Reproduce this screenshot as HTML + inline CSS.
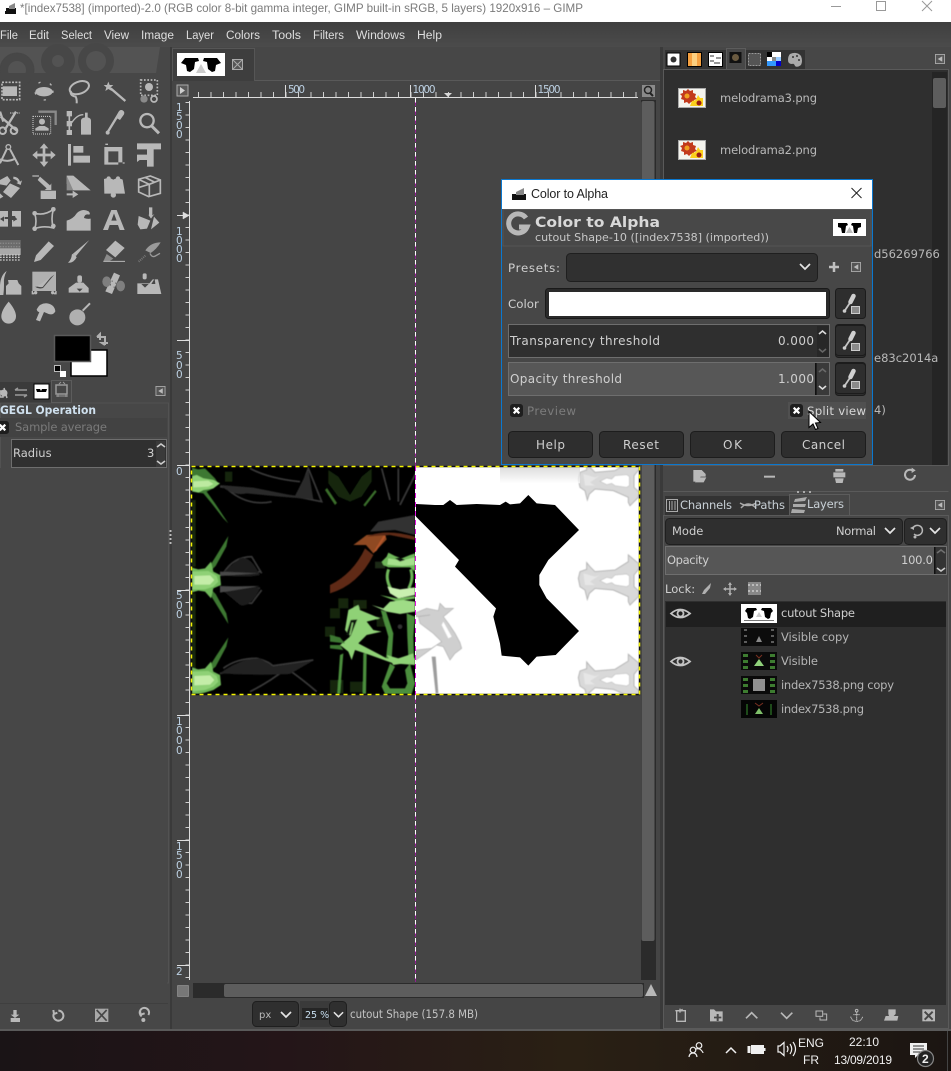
<!DOCTYPE html>
<html><head><meta charset="utf-8"><title>GIMP</title>
<style>
html,body{margin:0;padding:0;background:#474747;width:951px;height:1071px;overflow:hidden}
svg{display:block;position:absolute;left:0;top:0}
text{font-family:"DejaVu Sans",sans-serif;font-size:12px;fill:#d6d6d6}
.s{font-family:"Liberation Sans",sans-serif}
.m{font-size:11.5px;fill:#dedede}
.dim{fill:#8a8a8a}
.b{font-weight:bold}
.blue{font-size:10.5px;fill:#bcd0e2}
</style></head><body>
<svg width="951" height="1071" viewBox="0 0 951 1071" xmlns="http://www.w3.org/2000/svg">
<defs>
<filter id="sf" x="-5%" y="-5%" width="110%" height="110%"><feGaussianBlur stdDeviation="1.600"/></filter>
<linearGradient id="task" x1="0" x2="1" y1="0" y2="0"><stop offset="0" stop-color="#1a1416"/><stop offset=".3" stop-color="#241518"/><stop offset=".6" stop-color="#2a2014"/><stop offset="1" stop-color="#1b1512"/></linearGradient>
<linearGradient id="top" x1="0" x2="0" y1="0" y2="1"><stop offset="0" stop-color="#3f3f3f"/><stop offset="1" stop-color="#4b4b4b"/></linearGradient>
<symbol id="pick" viewBox="0 0 31 31" overflow="visible" preserveAspectRatio="xMidYMid meet">
<rect x=".5" y=".5" width="30" height="30" rx="3" fill="#2e2e2e" stroke="#1c1c1c"/>
<path d="M9.500 23L15.500 14" stroke="#c4c4c4" stroke-width="1.800"/><path d="M15.500 14L18.500 8" stroke="#d0d0d0" stroke-width="4.500" stroke-linecap="round"/><circle cx="9.500" cy="23" r="1.800" fill="#ccc"/>
<rect x="16.500" y="18.500" width="8" height="7" fill="#8b8b8b" stroke="#ccc"/>
</symbol>
<symbol id="chev" viewBox="0 0 12 8" overflow="visible"><path d="M1 1l5 5 5-5" fill="none" stroke="#e4e4e4" stroke-width="1.700"/></symbol>
<symbol id="menuicon" viewBox="0 0 11 11" overflow="visible"><rect x=".5" y=".5" width="10" height="10" fill="#555" stroke="#a8a8a8"/><path d="M3 5.500L8 2.500V8.500z" fill="#bbb"/></symbol>
<symbol id="chk" viewBox="0 0 14 14" overflow="visible"><rect x="0" y="0" width="14" height="14" rx="3" fill="#1e1e1e"/><path d="M4 4l6 6M10 4l-6 6" stroke="#fff" stroke-width="2.400"/></symbol>
<symbol id="wil" viewBox="0 0 33 17" overflow="visible"><rect width="33" height="17" fill="#fff"/><path d="M5 4h9l1 2-2 1-1 7-3 0-1-5-3-1zM28 4h-9l-1 2 2 1 1 7 3 0 1-5 3-1z" fill="#000"/><path d="M13 14l3.500-6 3.500 6z" fill="#bbb"/></symbol>
<symbol id="fl" viewBox="0 0 28 20" overflow="visible"><rect x=".5" y=".5" width="27" height="19" fill="#f4f4ee" stroke="#aaa"/><path d="M2 6l3-1 0-3 3 1 2-2 2 2 3-1 0 3 3 1-1 3 2 2-3 1 0 3-3-1-2 2-2-2-3 1 0-3-3-1 1-3z" fill="#c23a1c"/><circle cx="9" cy="8" r="2.500" fill="#f0a020"/><path d="M12 18l2-5 4-1 2-5 2 3 3 0 0 8z" fill="#fcd01c"/><circle cx="21" cy="15" r="2.500" fill="#9a1d14"/></symbol>
<symbol id="grn" viewBox="0 0 36 18" overflow="visible"><rect width="36" height="18" fill="#0a0a0a"/><path d="M2 2h5v3H2zM2 8h5v3H2zM2 14h5v3H2zM29 2h5v3h-5zM29 8h5v3h-5zM29 14h5v3h-5z" fill="#3d7c30"/><path d="M13 14l5-7 5 7z" fill="#8fd07a"/><path d="M15 3l3 3 3-3" stroke="#7a3020" fill="none"/></symbol>
<clipPath id="imgL"><rect x="191" y="467" width="224" height="227"/></clipPath>
<clipPath id="imgR"><rect x="416" y="467" width="224" height="227"/></clipPath>
<g id="gf">
<path d="M18 22L40 28 60 25 90 55 100 70 85 85 65 95 90 130 130 190 115 175 80 130 55 100 18 95Z" fill="#3c7830"/>
<path d="M18 50L35 45 55 55 85 60 105 70 85 85 55 90 40 98 18 92Z" fill="#8fd176"/>
<path d="M25 64L70 62 85 72 70 80 25 82Z" fill="#bdeaa0"/>
</g>
<g id="gm">
<path d="M72 322L92 290 130 228 124 260 92 318 80 330Z" fill="#3c7830"/>
<path d="M72 398L92 430 130 492 124 460 92 402 80 390Z" fill="#3c7830"/>
<path d="M18 322L40 328 60 325 78 305 85 335 105 345 108 375 85 385 78 415 60 395 40 392 18 398Z" fill="#6fb85a"/>
<path d="M18 335L70 333 95 348 100 365 85 380 60 388 18 388Z" fill="#8fd176"/>
<path d="M28 348L75 346 88 360 75 374 28 374Z" fill="#c4eda8"/>
</g>
<g id="gr">
<path d="M25 115L30 95 50 88 50 68 60 80 75 95 135 90 175 65 175 45 205 70 208 85 192 105 192 140 208 155 205 170 180 195 175 185 175 170 130 150 75 145 58 160 52 178 45 150 30 140Z" fill="#d9d9d9" stroke="#b6b6b6" stroke-width="3"/>
<path d="M40 100L75 110 90 105 60 125 75 135 45 135Z" fill="#e6e6e6"/>
<path d="M90 122L110 112 125 115 135 105 170 102 178 108 178 135 170 140 135 135 125 128 110 132Z" fill="#fff" stroke="#c2c2c2" stroke-width="2"/>
</g>
</defs>

<!-- base -->
<rect width="951" height="1071" fill="#474747"/>
<rect y="0" width="951" height="22" fill="#fff"/>
<rect y="22" width="951" height="25" fill="url(#top)"/>
<rect y="47" width="951" height="984" fill="#474747"/>

<!-- titlebar -->
<g transform="translate(3,2)"><rect x="3" y="6" width="10" height="6" fill="#111"/><path d="M6 4l6-3v6H6z" fill="#888"/><rect x="2" y="9" width="3" height="3" fill="#111"/></g>
<text class="s" x="20" y="12" style="font-size:12px;fill:#7b7b7b" textLength="563" lengthAdjust="spacingAndGlyphs">*[index7538] (imported)-2.0 (RGB color 8-bit gamma integer, GIMP built-in sRGB, 5 layers) 1920x916 – GIMP</text>
<path d="M831 6.500h10" stroke="#999" stroke-width="1"/>
<rect x="876.500" y="1.500" width="9" height="9" fill="none" stroke="#999"/>
<path d="M922 1l10 10M932 1l-10 10" stroke="#999"/>

<!-- menu -->
<g class="menu">
<text class="s m" x="0" y="39" textLength="18" lengthAdjust="spacingAndGlyphs">File</text><text class="s m" x="29" y="39" textLength="20" lengthAdjust="spacingAndGlyphs">Edit</text><text class="s m" x="61" y="39" textLength="31" lengthAdjust="spacingAndGlyphs">Select</text><text class="s m" x="104" y="39" textLength="25" lengthAdjust="spacingAndGlyphs">View</text><text class="s m" x="141" y="39" textLength="33" lengthAdjust="spacingAndGlyphs">Image</text><text class="s m" x="186" y="39" textLength="28" lengthAdjust="spacingAndGlyphs">Layer</text><text class="s m" x="226" y="39" textLength="34" lengthAdjust="spacingAndGlyphs">Colors</text><text class="s m" x="272" y="39" textLength="29" lengthAdjust="spacingAndGlyphs">Tools</text><text class="s m" x="313" y="39" textLength="31" lengthAdjust="spacingAndGlyphs">Filters</text><text class="s m" x="356" y="39" textLength="49" lengthAdjust="spacingAndGlyphs">Windows</text><text class="s m" x="417" y="39" textLength="25" lengthAdjust="spacingAndGlyphs">Help</text>
</g>

<!-- toolbox wilber -->
<path d="M0 47H160L156 73H0Z" fill="#535353"/>
<circle cx="17" cy="70" r="17" fill="#474747" stroke="#474747"/><circle cx="17" cy="70" r="9" fill="#535353"/>
<circle cx="58" cy="61" r="17" fill="#474747"/><circle cx="58" cy="61" r="6" fill="#535353"/>
<circle cx="96" cy="61" r="18" fill="#474747"/><circle cx="96" cy="61" r="10" fill="#535353"/>
<rect y="73" width="170" height="6" fill="#474747"/>

<!-- tools: zoom coords -->
<g transform="scale(.33333)" fill="#b8b8b8" stroke="none">
<!-- r1 -->
<rect x="6" y="247" width="53" height="52" fill="none" stroke="#b8b8b8" stroke-width="5" stroke-dasharray="6 4"/><rect x="8" y="259" width="43" height="29"/>
<ellipse cx="132" cy="275" rx="26" ry="14"/><ellipse cx="132" cy="272" rx="27" ry="28" fill="none" stroke="#b8b8b8" stroke-width="4" stroke-dasharray="7 30"/>
<ellipse cx="238" cy="263" rx="30" ry="18" transform="rotate(-20 238 263)" fill="none" stroke="#b8b8b8" stroke-width="6"/><path d="M213 272q-5 14 14 18q4 8 3 20" fill="none" stroke="#b8b8b8" stroke-width="6"/>
<path d="M332 265L376 303" stroke="#b8b8b8" stroke-width="7"/><path d="M325 245l4 10 11 0-8 7 3 11-10-6-9 6 3-11-8-7 10 0z"/>
<rect x="422" y="240" width="50" height="46" fill="none" stroke="#b8b8b8" stroke-width="5" stroke-dasharray="5 5"/><circle cx="447" cy="261" r="12"/><circle cx="432" cy="297" r="11" fill="#8a8a8a"/><circle cx="462" cy="297" r="9" fill="none" stroke="#b8b8b8" stroke-width="5"/>
<!-- r2 -->
<path d="M2 350l48 42M48 335L14 390M0 335l10 30" stroke="#b8b8b8" stroke-width="7" fill="none"/><circle cx="8" cy="392" r="10" fill="none" stroke="#b8b8b8" stroke-width="6"/><circle cx="42" cy="392" r="10" fill="none" stroke="#b8b8b8" stroke-width="6"/><path d="M30 339h30" stroke="#b8b8b8" stroke-width="4" stroke-dasharray="4 3"/>
<path d="M115 335h52v40" fill="none" stroke="#8a8a8a" stroke-width="7"/><rect x="99" y="349" width="53" height="53" fill="none" stroke="#d0d0d0" stroke-width="3" stroke-dasharray="3 3"/><circle cx="126" cy="365" r="9"/><path d="M106 392v-7l12-7h16l12 7v7z"/>
<path d="M208 340v62" stroke="#b8b8b8" stroke-width="5"/><rect x="200" y="333" width="16" height="16"/><rect x="200" y="363" width="16" height="16"/><rect x="200" y="390" width="16" height="15"/><path d="M214 370q16-26 36-26" fill="none" stroke="#b8b8b8" stroke-width="4"/><path d="M243 362q0-8 12-10v-14h8v14q10 2 10 10v42h-30z"/>
<path d="M322 398L350 352" stroke="#b8b8b8" stroke-width="7"/><path d="M346 352l10-17a8 8 0 0 1 16 8l-12 17z"/><circle cx="323" cy="398" r="6"/>
<circle cx="441" cy="362" r="20" fill="none" stroke="#b8b8b8" stroke-width="7"/><path d="M455 378L477 400" stroke="#b8b8b8" stroke-width="9"/>
<!-- r3 -->
<circle cx="25" cy="441" r="7" fill="none" stroke="#b8b8b8" stroke-width="4"/><path d="M20 448L0 490M30 448L55 495M0 478q25 10 45-2" fill="none" stroke="#b8b8b8" stroke-width="6"/>
<path d="M132 430l13 15h-9v16h16v-9l15 13-15 13v-9h-16v16h9l-13 16-13-16h9v-16h-16v9l-15-13 15-13v9h16v-16h-9z"/>
<rect x="204" y="432" width="9" height="65"/><rect x="220" y="438" width="30" height="20"/><rect x="220" y="467" width="50" height="21"/>
<path d="M313 441h54v46h-12v-33h-30v33h30v7h-42z" fill="#b8b8b8"/><path d="M316 433h8M368 489h6" stroke="#b8b8b8" stroke-width="4"/>
<path d="M411 430h72v18h-22v52h-20v-20h-22l-8 6v-22h30v-16h-30z"/>
<!-- r4 -->
<path d="M0 540l22-12 10 14-12 15-20-4zM30 550l30 14-27 30-24-18zM40 530q15 0 20 15l6-4-4 14-13-6 5-2q-4-9-14-10zM0 580l10 10-10 6z"/>
<path d="M97 526l20 0 0 4-20 0zM120 530l30 26 4-6 0 20-20 0 6-5-27-25z"/><rect x="122" y="572" width="46" height="25"/>
<path d="M200 527h20l52 44h-52l-20-20z"/><path d="M200 527v44h20z" fill="#8a8a8a"/><path d="M200 580h18v-8l17 11-17 11v-8h-18z"/>
<path d="M312 537l15-4 13 6 13-6 15 6 7 42h-62z"/><circle cx="326" cy="535" r="6"/><circle cx="354" cy="535" r="6"/><circle cx="340" cy="585" r="8"/>
<g fill="none" stroke="#b8b8b8" stroke-width="5"><path d="M416 538l35-10 30 12v40l-35 10-30-14z"/><path d="M416 538l32 15 33-13M448 553v38M435 532l30 15M418 562l32-10"/></g>
<!-- r5 -->
<path d="M0 633h24v18l-10 0 0 6 10 0v23H0zM36 633h27v47H36v-20l14 0-5-12-9 0z"/><path d="M0 657l12-8v16zM52 657l-12-8v16z" fill="#474747"/>
<g fill="none" stroke="#b8b8b8" stroke-width="5"><path d="M104 640q30 8 56-12q-8 30 0 56q-30-8-56 2q8-22 0-46z"/></g><circle cx="104" cy="640" r="7"/><circle cx="160" cy="628" r="7"/><circle cx="160" cy="678" r="7"/><circle cx="104" cy="686" r="7"/>
<path d="M200 692v-30q20-6 30-22q16-16 36-6q6 6 2 10q-14-4-16 10q10 4 20 2v36z"/>
<path d="M309 690l25-60h16l24 60h-15l-5-15h-25l-5 15zM334 662h16l-8-22z"/>
<path d="M416 648l35 14-10 24-20 2-8-14zM447 622h10v24l6-4-10 14-10-14 4 4zM462 650l16 18-25 20z"/>
<!-- r6 -->
<rect x="0" y="720" width="62" height="30" fill="#6c6c6c"/><rect x="0" y="745" width="62" height="20" fill="#aaa"/><path d="M0 730h62M0 740h62" stroke="#888" stroke-width="4" stroke-dasharray="4 4"/><path d="M0 765h62M0 772h62M0 780h62" stroke="#ccc" stroke-width="4" stroke-dasharray="5 4"/>
<path d="M102 786l6-20 38-42 16 14-40 42z"/>
<path d="M268 720L228 768l-10-6z"/><path d="M216 762q10 2 14 10q-10 18-26 16q10-8 12-26z"/>
<path d="M318 750l28-28 28 22-28 28z"/><path d="M320 762l20 14-12 8h-18z" fill="#8a8a8a"/><path d="M310 784h65" stroke="#b8b8b8" stroke-width="3"/>
<path d="M482 727q-30 0-46 24l16 8q18-12 30-32zM436 751l-6 12" fill="#9a9a9a"/><path d="M450 760q6 14 16 8l14-8" fill="none" stroke="#9a9a9a" stroke-width="4"/><path d="M416 785l20-18" stroke="#777" stroke-width="6" stroke-dasharray="3 3"/>
<!-- r7 -->
<path d="M0 885v-30q2-30 20-42q-10 20-8 38q0 20-2 34z"/><path d="M24 840h28l4 10 8 8v26H18v-26l8-8z"/>
<rect x="97" y="815" width="71" height="58" fill="#b0b0b0"/><path d="M97 873v8h6M168 873v8h-6" stroke="#b8b8b8" stroke-width="4"/><circle cx="107" cy="878" r="5"/><circle cx="158" cy="878" r="5"/><path d="M105 860q10 2 20-8l38-28-34 40q-14 4-24-4z" fill="#474747"/><path d="M108 857q8 0 16-6l32-24-28 34q-12 2-20-4z"/>
<rect x="232" y="826" width="14" height="22" rx="6"/><path d="M228 848h22l16 16v14h-60v-14z"/><path d="M230 866h18l-9 9z" fill="#474747"/>
<path d="M342 818l18 8-24 56-20-8z"/><ellipse cx="320" cy="845" rx="13" ry="16" fill="#7f7f7f"/><ellipse cx="362" cy="858" rx="13" ry="16" fill="#7f7f7f"/><path d="M335 842h3v3h-3zM346 848h3v3h-3zM330 853h3v3h-3zM341 860h3v3h-3z" fill="#474747"/>
<rect x="428" y="820" width="12" height="18" rx="5"/><path d="M412 850h36l10-12h16l10 44h-72z"/><path d="M424 852h22l-11 11z" fill="#474747"/><path d="M464 836l-10 16h12" fill="#474747"/>
<!-- r8 -->
<path d="M26 905q22 26 22 44a22 22 0 0 1-44 0q0-18 22-44z"/>
<path d="M110 928q10-20 32-18q22 4 24 24q-6 12-20 8l-14-6-12 28-12-4 10-24q-6 0-8-8z"/>
<circle cx="232" cy="952" r="24" fill="#b0b0b0"/><path d="M248 932l22-22" stroke="#b8b8b8" stroke-width="6"/>
</g>

<!-- fg/bg -->
<rect x="71" y="350" width="36" height="26" fill="#fff" stroke="#000" stroke-width="1.500"/>
<rect x="54.500" y="335.500" width="36" height="26" fill="#000" stroke="#5a5a5a" stroke-width="1.500"/>
<path d="M97 337h8v8M97 337l3 -3v6M105 345l-3-2h6" fill="none" stroke="#b0b0b0" stroke-width="2"/>
<rect x="54.500" y="365.500" width="6" height="6" fill="#000" stroke="#bbb"/><rect x="60" y="371" width="6" height="6" fill="#fff"/>

<!-- tool options tabs -->
<rect x="0" y="382" width="51" height="21" fill="#3b3b3b"/>
<rect x="51.500" y="380.500" width="20" height="22" fill="#474747" stroke="#5c5c5c"/>
<path d="M0 391h3v6H0zM4 388l3 10" stroke="#b8b8b8" fill="none" stroke-width="1.500"/><circle cx="4" cy="393" r="3.500" fill="#b8b8b8"/>
<path d="M15 390h12M15 395h12M15 390l3-2M27 395l-3 2" stroke="#9a9a9a" stroke-width="1.500" fill="none"/>
<g transform="translate(34,384)"><rect width="15" height="15" fill="#fff" stroke="#000"/><path d="M2 5h4l1 2 1-2h5l-1 3H3z" fill="#000"/></g>
<rect x="56" y="385" width="11" height="9" fill="none" stroke="#9a9a9a" stroke-width="1.500"/><path d="M56 396h12M58 394v3M66 394v3M59 384l2-2M65 384l-2-2" stroke="#9a9a9a"/>
<use href="#menuicon" x="155.500" y="386" width="10" height="10"/>
<rect x="0.500" y="403" width="168" height="580" fill="none" stroke="#5a5a5a" opacity=".6"/>
<text x="0" y="414" class="b" style="font-size:11.800px;fill:#cfe0ee" textLength="96" lengthAdjust="spacingAndGlyphs">GEGL Operation</text>
<rect x="0" y="418" width="167" height="19" fill="#424242"/>
<use href="#chk" x="-4" y="421" width="13" height="13"/>
<text x="15" y="431" style="font-size:11.500px;fill:#7a7a7a" textLength="92">Sample average</text>
<rect x="11.500" y="439.500" width="155" height="28" fill="#303030" stroke="#6e6e6e"/>
<rect x="156" y="441" width="9" height="26" fill="#3a3a3a"/>
<text x="13" y="457" style="font-size:11.500px;fill:#cfcfcf">Radius</text><text x="147" y="457" style="font-size:11.500px;fill:#cfcfcf">3</text>
<path d="M157 447l4-3 4 3M157 461l4 3 4-3" fill="none" stroke="#ccc" stroke-width="1.600"/>
<rect x="0" y="468" width="167" height="535" fill="#474747"/>
<rect x="0" y="1003" width="168" height="1" fill="#3f3f3f"/>
<g transform="translate(0,980) scale(.33333)" fill="#b8b8b8"><path d="M40 90h10v14h8l-13 10-13-10h8zM32 114h28v12H32z"/><path d="M175 92a15 15 0 1 1-13 8M160 90l2 12 10-4" fill="none" stroke="#b8b8b8" stroke-width="6"/><rect x="285" y="86" width="40" height="40" fill="#a8a8a8"/><path d="M290 90l30 32M320 90l-30 32" stroke="#474747" stroke-width="5"/><path d="M445 105a14 14 0 1 0-20 4M420 92l2 12 12-4" fill="none" stroke="#b8b8b8" stroke-width="6"/><circle cx="430" cy="120" r="6"/></g>

<!-- separators -->
<rect x="170" y="47" width="2" height="984" fill="#3a3a3a"/>
<rect x="660" y="47" width="3" height="984" fill="#3a3a3a"/>
<path d="M170.500 530v14" stroke="#bbb" stroke-width="2" stroke-dasharray="2 2"/>
<rect x="0" y="1029" width="951" height="2" fill="#5a5a5a"/>

<!-- image tabs -->
<rect x="172.500" y="48.500" width="82" height="33" fill="#3e3e3e" stroke="#565656"/>
<path d="M255 80.500H660" stroke="#595959"/>
<g transform="translate(177,53)"><rect width="48" height="23" fill="#fff"/><path d="M8 5h13l1 3-4 1-1 7-4 3-3-1-1-6-5-2zM40 5H27l-1 3 4 1 1 7 4 3 3-1 1-6 5-2z" fill="#000"/><path d="M19 20l5-9 5 9z" fill="#ccc"/></g>
<rect x="232.500" y="59.500" width="10" height="10" fill="#555" stroke="#aaa"/><path d="M233 60l9 9M242 60l-9 9" stroke="#aaa"/>
<!-- rulers -->
<rect x="172" y="81" width="488" height="948" fill="#454545"/>
<rect x="177" y="85" width="11" height="11" fill="#5a5a5a" stroke="#aaa" stroke-width="1"/><path d="M180 87v7l5-3.500z" fill="#cfcfcf"/>
<path d="M193 97.500H638" stroke="#ddd" stroke-width="1"/>
<line x1="198" x2="638" y1="94.500" y2="94.500" stroke="#d0d0d0" stroke-width="5" stroke-dasharray="1 11.500" stroke-dashoffset="0"/>
<path d="M285.500 85V97M410.500 85V97M535.500 85V97" stroke="#ddd"/>
<text class="blue" x="288" y="93" textLength="17">500</text><text class="blue" x="412.500" y="93" textLength="23">1000</text><text class="blue" x="537.500" y="93" textLength="23">1500</text>
<path d="M444 93h8l-4 4z" fill="#d8d8d8"/>
<path d="M189.500 101V980" stroke="#ddd"/>
<line x1="187.500" x2="187.500" y1="102" y2="980" stroke="#d0d0d0" stroke-width="4" stroke-dasharray="1 11.500"/>
<path d="M177 215.500H190M177 340.500H190M177 465.500H190M177 590.500H190M177 715.500H190M177 840.500H190M177 965.500H190" stroke="#ddd"/>
<g>
<text class="blue" x="176" y="111">1</text><text class="blue" x="176" y="120">5</text><text class="blue" x="176" y="129">0</text><text class="blue" x="176" y="138">0</text>
<text class="blue" x="176" y="235">1</text><text class="blue" x="176" y="244">0</text><text class="blue" x="176" y="253">0</text><text class="blue" x="176" y="262">0</text>
<text class="blue" x="176" y="359">5</text><text class="blue" x="176" y="369">0</text><text class="blue" x="176" y="378">0</text>
<text class="blue" x="176" y="475">0</text>
<text class="blue" x="176" y="599">5</text><text class="blue" x="176" y="609">0</text><text class="blue" x="176" y="618">0</text>
<text class="blue" x="176" y="725">1</text><text class="blue" x="176" y="734">0</text><text class="blue" x="176" y="744">0</text><text class="blue" x="176" y="754">0</text>
<text class="blue" x="176" y="850">1</text><text class="blue" x="176" y="859">5</text><text class="blue" x="176" y="869">0</text><text class="blue" x="176" y="878">0</text>
<text class="blue" x="176" y="975">2</text>
</g>
<path d="M177 215.500l12 0M183 212l6 3.500-6 3.500z" fill="#ddd" stroke="#ddd" stroke-width=".5"/>

<!-- right scrollbar -->
<rect x="641" y="100" width="15" height="880" fill="#2b2b2b"/>
<rect x="641.500" y="101" width="13" height="840" rx="2" fill="#5d5d5d"/>
<rect x="642" y="85" width="13" height="12" fill="#8a8a8a"/><circle cx="648" cy="90" r="3.500" fill="none" stroke="#222" stroke-width="1.500"/><path d="M650 93l3 3" stroke="#222" stroke-width="2"/>
<!-- bottom scrollbar -->
<rect x="193" y="983" width="451" height="15" fill="#2b2b2b"/>
<rect x="224" y="984" width="419" height="13" rx="2" fill="#5d5d5d"/>
<rect x="177.500" y="985.500" width="11" height="11" fill="#777" stroke="#a8a8a8" stroke-dasharray="1 1"/>
<path d="M651 984l6 12h-12z" fill="#b8b8b8"/>
<!-- status -->
<rect x="252.500" y="1001.500" width="46" height="25" rx="4" fill="#2f2f2f" stroke="#1f1f1f"/>
<text x="259" y="1018" style="font-size:10px;fill:#b8b8b8">px</text>
<use href="#chev" x="280" y="1011" width="12" height="8"/>
<rect x="300" y="1001" width="30" height="26" fill="#3a3a3a"/>
<rect x="302" y="1008" width="26" height="12" fill="#252525"/>
<text x="305" y="1018" style="font-size:9.500px;fill:#c8dff0">25 %</text>
<rect x="329.500" y="1001.500" width="17" height="25" rx="4" fill="#2f2f2f" stroke="#1f1f1f"/>
<use href="#chev" x="333" y="1011" width="11" height="8"/>
<text x="350" y="1018" style="font-size:11.500px;fill:#c4c4c4" textLength="128" lengthAdjust="spacingAndGlyphs">cutout Shape (157.8 MB)</text>

<!-- image -->
<rect x="191" y="466" width="225" height="229" fill="#000"/>
<rect x="416" y="466" width="224" height="229" fill="#fff"/>
<g clip-path="url(#imgL)">
<g transform="translate(185,460) scale(.33333)" filter="url(#sf)">
<g fill="#12260f"><rect x="120" y="35" width="22" height="30"/><rect x="18" y="120" width="14" height="200"/><rect x="18" y="400" width="14" height="230"/><path d="M430 30l30 20 35 55 35-55 30-25 0 40-30 45-35 15-35-15-30-40z"/></g>
<g fill="#3a6e2c"><path d="M420 90l30 45 6-6-30-45zM570 90l-35 45 5 5 35-45z"/></g>
<g fill="none" stroke="#3b3b3b" stroke-width="5"><path d="M195 25q55 30 150 40M130 90q60 50 130 35M105 80l230 30 75 15-40-100-30 85M590 25l25 95M700 25l-55 110M640 25v100"/><path d="M105 340l120-5M105 380l120 5M115 340q30-50 85-50l30 50M115 380q30 50 85 50l30-40"/><path d="M105 640l280-40M115 625q40-30 100-30q40 10 50 25M195 695q60-30 110-70q50 35 90 70"/></g>
<path d="M105 75l100 8 125 25 40-80 15 90-100-8-100-10q-40 10-80-25z" fill="#2c2c2c"/>
<path d="M105 345l60-50q30-10 60 50-40 10-120 0zM105 385l60 50q30 10 60-50-40-10-120 0z" fill="#1e1e1e"/>
<path d="M105 335l120 5-120 8zM105 380l120-2-120 20z" fill="#484848"/>
<path d="M105 640q60-45 120-45l40 25 120-18-70 40q-100 5-210-2z" fill="#232323"/>
<use href="#gf"/><use href="#gm"/>
<path d="M72 622L92 590 130 532 124 560 92 620 80 630Z" fill="#3c7830"/>
<path d="M18 622L40 628 60 625 78 605 85 635 105 645 108 675 85 690 60 698 40 702 18 702Z" fill="#6fb85a"/>
<path d="M18 635L70 633 95 648 100 665 85 680 60 690 18 695Z" fill="#8fd176"/>
<path d="M28 648L75 646 88 660 75 674 28 676Z" fill="#c4eda8"/>
<path d="M555 215l25-30 110-20v60l-60-15z" fill="#333"/>
</g>
<g transform="translate(330,530) scale(.33333)" filter="url(#sf)">
<g fill="#14280f"><rect x="25" y="205" width="30" height="30"/><rect x="70" y="210" width="40" height="26"/><rect x="0" y="450" width="40" height="40"/><rect x="60" y="455" width="40" height="32"/><rect x="140" y="260" width="30" height="30"/><rect x="0" y="235" width="30" height="30"/><rect x="-15" y="290" width="30" height="30"/></g>
<path d="M0 165Q70 130 105 55L130 75Q85 165 0 190Z" fill="#5e2a14"/>
<path d="M70 45L110 15 165 12 170 28 130 70 108 45Z" fill="#8f4a24"/>
<path d="M128 70L160 18 168 18 140 62Z" fill="#b5572a"/>
<path d="M110 20Q165 -5 255 20V30L180 15Z" fill="#5e2a14"/>
<rect x="135" y="95" width="30" height="20" fill="#1a2a18"/>
<path d="M155 95L170 80 175 68 195 78 215 85 240 75 255 70V125L240 112 175 112 160 105Z" fill="#6fb85a"/>
<path d="M175 85L215 92 255 82V105L215 108 172 104Z" fill="#a6e08c"/>
<path d="M195 85L210 82 225 90 210 95Z" fill="#0a120a"/>
<path d="M176 118Q165 145 182 175M242 118Q252 145 236 175" fill="none" stroke="#6fb85a" stroke-width="9"/>
<path d="M172 170L210 178 255 172V195L205 205 180 190Z" fill="#c9f0b0"/>
<path d="M150 195L200 205 255 198V206L200 214Z" fill="#6fb85a"/>
<path d="M125 225L160 235 180 215 220 210 255 215V245L210 252 170 245Z" fill="#9fdc86"/>
<path d="M168 245L190 310 185 385 168 385 175 320 152 240Z" fill="#4c8e3c"/>
<path d="M230 250L232 320 235 380 252 380 250 320 255 260Z" fill="#4c8e3c"/>
<circle cx="210" cy="290" r="7" fill="#303030"/>
<path d="M55 240L85 225 90 240 150 265 110 275 130 300 155 305 110 315 85 340 170 385 255 385V405L190 400 120 375 75 360 65 390 55 365 30 345 60 320 45 300Z" fill="#8fd176"/>
<path d="M62 270L82 268 62 318 48 315Z" fill="#0b120a"/><path d="M68 278L60 315" stroke="#8fd176" stroke-width="4"/>
<path d="M30 375L40 370 30 492H22ZM100 370L110 370 108 492H98Z" fill="#4c8e3c"/>
<path d="M0 315L30 322 45 340 0 335ZM0 345L30 345 40 360 0 355Z" fill="#3c7830"/>
<path d="M170 375L205 385 250 370 255 395 190 405Z" fill="#8fd176"/>
<path d="M180 400L155 470 165 492H245L255 460 240 400 225 420 232 460 225 475H180L170 460 195 410Z" fill="#4c8e3c"/>
</g>
</g>
<g clip-path="url(#imgR)">
<g transform="translate(570,540) scale(.33333)" filter="url(#sf)"><use href="#gr"/><use href="#gr" y="-298"/><use href="#gr" y="298"/></g>
<g transform="translate(410,460) scale(.33333)">
<linearGradient id="shad" x1="0" x2="0" y1="0" y2="1"><stop offset="0" stop-color="#ccc"/><stop offset="1" stop-color="#fff"/></linearGradient>
<rect x="270" y="20" width="240" height="50" fill="url(#shad)" opacity=".7"/>
<g filter="url(#sf)">
<path d="M18 458L50 445 85 452 90 430 105 445 130 445 110 462 100 470 115 490 135 520 150 548 155 565 135 580 120 600 100 560 80 555 18 600V570L65 565 95 545 70 520 30 490 25 470 60 465 18 470Z" fill="#cfcfcf" stroke="#b0b0b0" stroke-width="2"/>
<path d="M100 485L125 530 115 535 95 495Z" fill="#fff"/>
<path d="M65 590l12 110h8l-8-110z" fill="#9c9c9c"/>
</g>
<path d="M18 132L75 135 100 135 120 120 140 135 200 132 270 135 287 125 300 133 330 130 355 105 380 130 435 135 507 210 415 300 388 345 388 375 410 415 507 513 437 585 380 590 355 617 330 592 275 587 270 550 250 470 258 445 135 320 147 300 18 170Z" fill="#000"/>
</g>
</g>
<!-- marching ants -->
<g fill="none" stroke-width="1.500">
<rect x="191.500" y="466.500" width="448" height="228" stroke="#111"/>
<rect x="191.500" y="466.500" width="448" height="228" stroke="#f4f400" stroke-dasharray="4 4"/>
</g>
<!-- split line -->
<path d="M415.500 98V466M415.500 695V982" stroke="#fff" stroke-dasharray="5 4"/>
<path d="M415.500 98V466M415.500 695V982" stroke="#d0d" stroke-dasharray="4 5" stroke-dashoffset="5" opacity=".5"/>
<path d="M415.500 466V695" stroke="#fff"/><path d="M415.500 466V695" stroke="#e010e0" stroke-dasharray="5 4"/>

<!-- right dock top -->
<rect x="663" y="47" width="288" height="23" fill="#474747"/>
<rect x="665" y="50" width="140" height="20" fill="#333"/>
<rect x="726.500" y="48.500" width="19" height="22" fill="#474747" stroke="#5c5c5c"/>
<g><rect x="667" y="53" width="13" height="13" fill="#fff" stroke="#000"/><circle cx="673.500" cy="59.500" r="3" fill="#333"/></g>
<rect x="687.500" y="52.500" width="14" height="14" fill="#f4a040" stroke="#000"/><rect x="692" y="53" width="5" height="13" fill="#fbcf80"/>
<rect x="708.500" y="52.500" width="14" height="14" fill="#fff" stroke="#000"/><path d="M710 56h4M710 61h4M716 58h5M714 63h6" stroke="#777" stroke-width="1.500"/>
<rect x="729.500" y="52" width="12" height="11" fill="#111"/><circle cx="735.500" cy="57.500" r="3.500" fill="#6a5a40"/>
<rect x="748.500" y="53.500" width="12" height="12" fill="#555" stroke="#9a9a9a" stroke-dasharray="2 1"/>
<g transform="translate(767,52)"><rect width="14" height="14" fill="#fff"/><rect width="5" height="5" fill="#000"/><rect x="5" y="5" width="4" height="4" fill="#888"/><rect x="9" y="5" width="5" height="4" fill="#9cf"/><rect y="9" width="9" height="5" fill="#39f"/><rect x="9" y="9" width="5" height="5" fill="#00c"/></g>
<path d="M790 54q7-3 11 2q2 5 0 9q-4 3-6 1q-1-3-3-2-4 0-4-4 0-4 2-6z" fill="#aaa"/><circle cx="793" cy="57" r="1" fill="#333"/><circle cx="797" cy="56" r="1" fill="#333"/><circle cx="799" cy="60" r="1" fill="#333"/>
<use href="#menuicon" x="935" y="54" width="10" height="10"/>
<rect x="663.500" y="69.500" width="285" height="396" fill="#2f2f2f" stroke="#5a5a5a"/>
<rect x="932" y="72" width="15" height="393" fill="#252525"/>
<rect x="933" y="78" width="13" height="30" rx="2" fill="#5d5d5d"/>
<use href="#fl" x="678" y="88" width="28" height="20"/>
<use href="#fl" x="678" y="140" width="28" height="20"/>
<text x="720" y="102" style="font-size:11.500px;fill:#b9b9b9" textLength="97">melodrama3.png</text>
<text x="720" y="154" style="font-size:11.500px;fill:#b9b9b9" textLength="97">melodrama2.png</text>
<text x="874" y="258" style="font-size:11.500px;fill:#b9b9b9">d56269766</text>
<text x="874" y="362" style="font-size:11.500px;fill:#b9b9b9">e83c2014a</text>
<text x="874" y="414" style="font-size:11.500px;fill:#b9b9b9">4)</text>
<g transform="translate(660,465) scale(.33333)" fill="#b8b8b8"><path d="M100 50V15h25l12 12v8h-15l-10 15zM105 52l10-15h24l-8 15z"/><rect x="312" y="32" width="33" height="6"/><path d="M520 22h36v15h-36zM526 12h24v8h-24zM525 40h26l-3 14h-20z"/><path d="M765 30a15 15 0 1 1-8-14" fill="none" stroke="#b8b8b8" stroke-width="6"/><path d="M755 8l12 8-12 8z"/></g>
<rect x="663.500" y="491" width="285" height="1" fill="#5a5a5a"/>
<path d="M797 492h2M803 492h2M809 492h2" stroke="#aaa" stroke-width="2"/>

<!-- layers tabs -->
<rect x="665" y="496" width="124" height="19" fill="#333"/>
<rect x="789.500" y="494.500" width="60" height="21" fill="#474747" stroke="#5c5c5c"/>
<rect x="666.500" y="499.500" width="11" height="12" fill="none" stroke="#aaa"/><path d="M669.500 501v9M672 501v9M675 501v9" stroke="#aaa"/>
<text x="680" y="509" style="font-size:11.500px;fill:#c8d0d6" textLength="52">Channels</text>
<path d="M740 503q8 5 16 0M741 508q7-8 15 0" fill="none" stroke="#aaa" stroke-width="1.500"/>
<text x="754" y="509" style="font-size:11.500px;fill:#c8d0d6" textLength="31">Paths</text>
<path d="M795 499l12-2-2 4-11 1zM793 504h13l-1 3h-12zM792 509l13 1-1 3h-13z" fill="#aaa"/>
<text x="807" y="508" style="font-size:11.500px;fill:#c8d0d6" textLength="37">Layers</text>
<use href="#menuicon" x="935" y="500" width="10" height="10"/>
<rect x="663.500" y="515.500" width="285" height="513" fill="none" stroke="#5a5a5a"/>
<rect x="665.500" y="518.500" width="237" height="26" rx="4" fill="#2f2f2f" stroke="#1f1f1f"/>
<text x="672" y="535" style="font-size:11.500px;fill:#cfcfcf">Mode</text><text x="836" y="535" style="font-size:11.500px;fill:#cfcfcf" textLength="40">Normal</text>
<use href="#chev" x="884" y="527" width="12" height="8"/>
<rect x="904.500" y="518.500" width="42" height="26" rx="4" fill="#2f2f2f" stroke="#1f1f1f"/>
<path d="M913 528a5 5 0 1 1 1 6" fill="none" stroke="#b8b8b8" stroke-width="1.500"/><path d="M910 528l4 -2v4z" fill="#b8b8b8"/><circle cx="915" cy="537" r="1.500" fill="#b8b8b8"/>
<use href="#chev" x="929" y="527" width="12" height="8"/>
<rect x="665.500" y="546.500" width="281" height="28" fill="#333" stroke="#6e6e6e"/>
<rect x="666" y="547" width="268" height="27" fill="#565656"/>
<rect x="934" y="547" width="1.500" height="27" fill="#111"/>
<text x="667" y="564" style="font-size:11.500px;fill:#cfcfcf" textLength="42">Opacity</text><text x="901" y="564" style="font-size:11.500px;fill:#cfcfcf" textLength="32">100.0</text>
<path d="M937 553l4-3 4 3" fill="none" stroke="#6f6f6f" stroke-width="1.600"/><path d="M937 568l4 3 4-3" fill="none" stroke="#ccc" stroke-width="1.600"/>
<text x="665" y="593" style="font-size:11.500px;fill:#cfcfcf">Lock:</text>
<path d="M702 594l2-4 7-7-1 5-5 6z" fill="#b0b0b0"/>
<path d="M730 583v12M724 589h12" stroke="#b0b0b0" stroke-width="1.500"/><path d="M730 582l-2 3h4zM730 596l-2-3h4zM723 589l3-2v4zM737 589l-3-2v4z" fill="#b0b0b0"/>
<rect x="748" y="582" width="13" height="13" fill="#888"/><path d="M748 585h13M748 591h13" stroke="#bbb" stroke-width="2" stroke-dasharray="2 2"/>
<rect x="665" y="601" width="281" height="404" fill="#2f2f2f"/>
<rect x="666" y="602" width="280" height="25" fill="#1f1f1f"/>
<g fill="none" stroke="#c4c4c4" stroke-width="1.800"><path d="M671 613.500q9-8 19 0q-10 8-19 0zM671 661.500q9-8 19 0q-10 8-19 0z"/><circle cx="680.500" cy="613.500" r="3"/><circle cx="680.500" cy="661.500" r="3"/></g>
<g transform="translate(741,604)"><rect width="36" height="19" fill="#fff"/><path d="M6 4h9l1 2-3 1-1 6-3 2-2-1-1-5-2-2zM30 4h-9l-1 2 3 1 1 6 3 2 2-1 1-5 2-2z" fill="#000"/><path d="M15 13l3-5 3 5z" fill="#ccc"/><path d="M3 16.500h30" stroke="#777"/></g>
<text x="781" y="617" style="font-size:11.500px;fill:#cfcfcf" textLength="74">cutout Shape</text>
<g transform="translate(741,628)"><rect width="36" height="18" fill="#0c0c0c"/><path d="M15 14l3-6 3 6z" fill="#888"/><path d="M3 2h3M3 8h3M30 2h3M30 8h3M3 14h3M30 14h3" stroke="#777" stroke-width="1.500"/></g>
<text x="781" y="641" style="font-size:11.500px;fill:#b5b5b5" textLength="68">Visible copy</text>
<use href="#grn" x="741" y="652" width="36" height="18"/>
<text x="781" y="665" style="font-size:11.500px;fill:#b5b5b5" textLength="37">Visible</text>
<g><use href="#grn" x="741" y="676" width="36" height="18"/><rect x="753" y="679" width="12" height="12" fill="#909090"/></g>
<text x="781" y="689" style="font-size:11.500px;fill:#b5b5b5" textLength="113">index7538.png copy</text>
<g transform="translate(741,700)"><rect width="36" height="18" fill="#050505"/><path d="M14 14l4-6 4 6z" fill="#7fbf6a"/><path d="M6 4v11M30 4v11" stroke="#1e4a1a" stroke-width="2"/><path d="M14 3l4 3 4-3" stroke="#7a3020" fill="none"/></g>
<text x="781" y="713" style="font-size:11.500px;fill:#b5b5b5" textLength="83">index7538.png</text>
<g transform="translate(660,990) scale(.33333)" fill="#b8b8b8"><path d="M50 62h26v32H50z" fill="none" stroke="#b8b8b8" stroke-width="4"/><path d="M46 62h14l8-4M60 56v12M54 62h12" stroke="#b8b8b8" stroke-width="4"/><path d="M150 58h12l6 6h20v30h-38z"/><path d="M170 72h6v8h8v5h-8v8h-6v-8h-8v-5h8z" fill="#474747"/><path d="M258 85l17-17 17 17M363 68l17 17 17-17" fill="none" stroke="#b8b8b8" stroke-width="5"/><rect x="468" y="63" width="20" height="16" fill="none" stroke="#b8b8b8" stroke-width="3"/><path d="M490 72h10v18h-20v-8" fill="none" stroke="#b8b8b8" stroke-width="3"/><circle cx="590" cy="62" r="4" fill="none" stroke="#b8b8b8" stroke-width="3"/><path d="M590 66v28M580 74h20M572 80q4 14 18 14 14 0 18-14" fill="none" stroke="#b8b8b8" stroke-width="3" stroke-dasharray="4 1"/><path d="M685 58h22v14l-6 6h14l-3 14h-40l5-14h10l-2-6z"/><rect x="787" y="58" width="38" height="36"/><path d="M794 65l24 24M818 65l-24 24" stroke="#474747" stroke-width="6"/></g>

<!-- taskbar -->
<rect y="1031" width="951" height="40" fill="url(#task)"/>
<path d="M947.500 1031V1071" stroke="#444"/>
<g fill="none" stroke="#f0f0f0" stroke-width="1.200">
<circle cx="699" cy="1045.500" r="2.800"/><circle cx="693" cy="1050" r="2.800"/><path d="M689 1057q.5-4 4-4 3.500 0 4 4M696 1049q3-1 5 1t2 3"/>
<path d="M726 1053l5-5 5 5" stroke-width="1.500"/>
<path d="M780 1046h-2v6h2l4 3.500v-13zM787 1046q2 3 0 6M790 1044q3.500 5 0 10M793 1042q5 7 0 14"/>
</g>
<rect x="751.500" y="1045.500" width="12" height="8" fill="#f0f0f0" stroke="#f0f0f0"/><rect x="764" y="1048" width="1.500" height="3" fill="#f0f0f0"/><path d="M749 1046v7" stroke="#f0f0f0" stroke-width="3"/>
<text class="s" x="798" y="1047" style="font-size:12px;fill:#f0f0f0">ENG</text>
<text class="s" x="803" y="1064" style="font-size:12px;fill:#f0f0f0">FR</text>
<text class="s" x="849" y="1046" style="font-size:12px;fill:#f0f0f0">22:10</text>
<text class="s" x="834" y="1064" style="font-size:12px;fill:#f0f0f0" textLength="58">13/09/2019</text>
<path d="M910 1043h17v12h-9l-3 3v-3h-5z" fill="#f0f0f0"/><path d="M913 1046h11M913 1049h11M913 1052h8" stroke="#333"/>
<circle cx="925.500" cy="1058.500" r="8" fill="#222" stroke="#888" stroke-width="1.200"/>
<text class="s b" x="922" y="1063" style="font-size:12px;fill:#f0f0f0">2</text>

<!-- dialog -->
<rect x="501.500" y="179.500" width="371" height="285" fill="#474747" stroke="#0a78d0"/>
<rect x="502" y="180" width="370" height="29" fill="#fff"/>
<g transform="translate(512,187)"><rect x="0" y="7" width="14" height="6" fill="#111"/><path d="M4 5l8-4v7H4z" fill="#888"/></g>
<text class="s" x="531" y="198" style="font-size:12.500px;fill:#222" textLength="77">Color to Alpha</text>
<path d="M851.500 188l10 10M861.500 188l-10 10" stroke="#222"/>
<rect x="503" y="209.500" width="368" height="36.500" fill="#484848" stroke="#555"/>
<path d="M526 218a9.500 9.500 0 1 0 1 9h-8" fill="none" stroke="#b8b8b8" stroke-width="5"/>
<text class="b" x="535" y="227" style="font-size:14.500px;fill:#d8d8d8" textLength="125" lengthAdjust="spacingAndGlyphs">Color to Alpha</text>
<text x="535" y="241" style="font-size:11px;fill:#c8c8c8" textLength="234" lengthAdjust="spacingAndGlyphs">cutout Shape-10 ([index7538] (imported))</text>
<use href="#wil" x="833" y="219" width="33" height="17"/>
<text x="508" y="272" style="font-size:11.800px;fill:#cfcfcf" textLength="52">Presets:</text>
<rect x="566.500" y="253.500" width="251" height="28" rx="4" fill="#303030" stroke="#1f1f1f"/>
<use href="#chev" x="799" y="263" width="12" height="8"/>
<path d="M834 262v10M829 267h10" stroke="#c0c0c0" stroke-width="2.500"/>
<use href="#menuicon" x="851" y="262" width="10" height="10"/>
<text x="508" y="308" style="font-size:11.800px;fill:#cfcfcf">Color</text>
<rect x="545.500" y="288.500" width="284" height="30" rx="3" fill="#2a2a2a" stroke="#1a1a1a"/>
<rect x="549" y="292" width="277" height="24" fill="#fff"/>
<use href="#pick" x="835" y="288" width="31" height="31"/>
<rect x="508.500" y="324.500" width="321" height="33" fill="#2f2f2f" stroke="#6e6e6e"/>
<rect x="817" y="326" width="12" height="31" fill="#272727"/>
<text x="510" y="345" style="font-size:12px;fill:#cfcfcf" textLength="150">Transparency threshold</text>
<text x="778" y="345" style="font-size:12px;fill:#cfcfcf" textLength="36">0.000</text>
<path d="M819 334l3.500-3 3.500 3" fill="none" stroke="#ddd" stroke-width="1.600"/><path d="M819 349l3.500 3 3.500-3" fill="none" stroke="#666" stroke-width="1.600"/>
<rect x="835.500" y="324.500" width="30" height="33" rx="3" fill="#2e2e2e" stroke="#1c1c1c"/><use href="#pick" x="835" y="325" width="31" height="31"/>
<rect x="508.500" y="362.500" width="321" height="33" fill="#2f2f2f" stroke="#6e6e6e"/>
<rect x="509" y="363" width="306" height="32" fill="#575757"/>
<rect x="815" y="363" width="1.500" height="32" fill="#111"/>
<rect x="817" y="363" width="12" height="32" fill="#3a3a3a"/>
<text x="510" y="383" style="font-size:12px;fill:#cfcfcf" textLength="112">Opacity threshold</text>
<text x="778" y="383" style="font-size:12px;fill:#cfcfcf" textLength="36">1.000</text>
<path d="M819 372l3.500-3 3.500 3" fill="none" stroke="#6a6a6a" stroke-width="1.600"/><path d="M819 386l3.500 3 3.500-3" fill="none" stroke="#ddd" stroke-width="1.600"/>
<rect x="835.500" y="362.500" width="30" height="33" rx="3" fill="#2e2e2e" stroke="#1c1c1c"/><use href="#pick" x="835" y="363" width="31" height="31"/>
<use href="#chk" x="510" y="404" width="13" height="13"/>
<text x="527" y="415" style="font-size:11.800px;fill:#7c7c7c" textLength="49">Preview</text>
<rect x="788" y="402" width="78" height="17" fill="#505050"/>
<use href="#chk" x="790" y="404" width="13" height="13"/>
<text x="807" y="415" style="font-size:11.800px;fill:#d8d8d8" textLength="59">Split view</text>
<g style="font-size:12px">
<rect x="508.500" y="431.500" width="84" height="26" rx="4" fill="#2e2e2e" stroke="#1d1d1d"/><text x="536" y="449" style="fill:#cfcfcf" textLength="29">Help</text>
<rect x="599.500" y="431.500" width="84" height="26" rx="4" fill="#2e2e2e" stroke="#1d1d1d"/><text x="623" y="449" style="fill:#cfcfcf" textLength="36">Reset</text>
<rect x="690.500" y="431.500" width="84" height="26" rx="4" fill="#2e2e2e" stroke="#1d1d1d"/><text x="723" y="449" style="fill:#cfcfcf" textLength="19">OK</text>
<rect x="781.500" y="431.500" width="84" height="26" rx="4" fill="#2e2e2e" stroke="#1d1d1d"/><text x="802" y="449" style="fill:#cfcfcf" textLength="43">Cancel</text>
</g>
<path d="M809 411.500v16l4-3.500 2.500 5.500 2.500-1-2.500-5.500 5-.5z" fill="#fff" stroke="#000"/>
</svg>
</body></html>
